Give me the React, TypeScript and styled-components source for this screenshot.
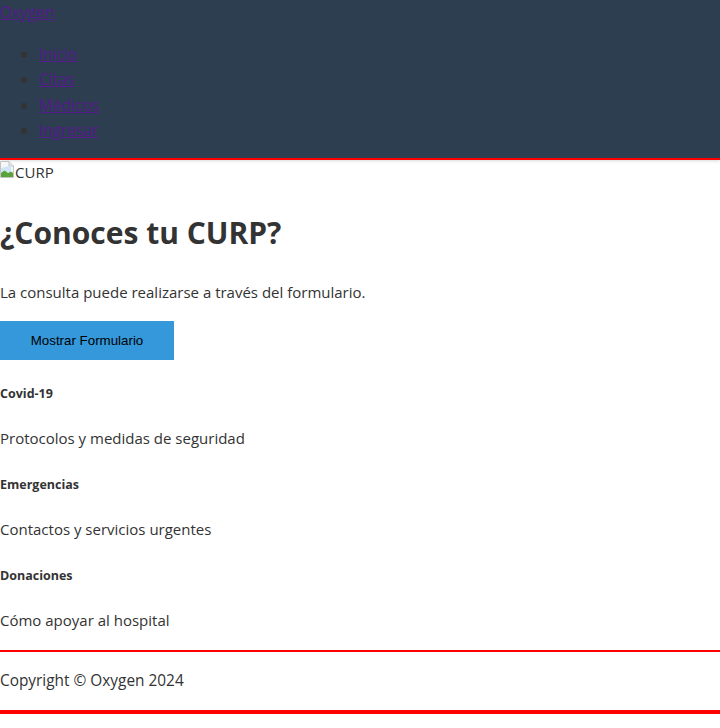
import React, { FC, ReactElement } from 'react';
import styled, { createGlobalStyle } from 'styled-components';

const GlobalStyle = createGlobalStyle`
  html, body {
    margin: 0;
    padding: 0;
    background: #fff;
  }
  body {
    font-family: "Open Sans", "Noto Sans", sans-serif;
    font-size: 15px;
    line-height: 25.6px;
    color: #333;
  }
  a {
    color: #551a8b;
    text-decoration: underline;
  }
`;

const Header = styled.header`
  height: 158px;
  background: #2c3e50;
  border-bottom: 2px solid #ff0000;
  box-shadow: 0 1px 3px rgba(0, 0, 0, 0.15);
`;
const Brand = styled.a`
  display: inline-block;
  font-size: 15.5px;
`;
const NavList = styled.ul`
  margin: 16px 0 0;
  padding-left: 39px;
`;
const NavItem = styled.li`
  font-size: 15.5px;
`;

const Main = styled.main``;

const BrokenImage = styled.div`
  display: flex;
  align-items: flex-start;
  height: 25.6px;
  padding-top: 1px;
  box-sizing: border-box;
`;
const AltText = styled.span`
  line-height: 22px;
  margin-left: 1px;
`;

const Title = styled.h1`
  margin: 21.5px 0;
  font-size: 30px;
  line-height: 51.2px;
  font-weight: 700;
`;
const Text = styled.p`
  margin: 16px 0;
`;
const ShowButton = styled.button`
  display: block;
  width: 174px;
  height: 39px;
  margin: 0;
  border: none;
  background: #3498db;
  color: #000;
  font-family: "Liberation Sans", Arial, sans-serif;
  font-size: 13.33px;
  cursor: pointer;
`;

const Card = styled.section``;
const CardTitle = styled.h5`
  margin: 22.2px 0;
  font-size: 12.5px;
  line-height: 21.25px;
  font-weight: 700;
`;

const Footer = styled.footer`
  border-top: 2px solid #ff0000;
  border-bottom: 4px solid #ff0000;
`;

const FooterText = styled.p`
  margin: 16px 0;
  font-size: 15.4px;
`;

const links = ['Inicio', 'Citas', 'Médicos', 'Ingresar'];

const cards = [
  { title: 'Covid-19', text: 'Protocolos y medidas de seguridad' },
  { title: 'Emergencias', text: 'Contactos y servicios urgentes' },
  { title: 'Donaciones', text: 'Cómo apoyar al hospital' },
];

// broken image placeholder, as the browser draws it
const BrokenIcon: FC = (): ReactElement => (
  <svg width="14" height="17" viewBox="0 0 14 17">
    <path d="M0.5 0.5 H9 L13.5 5 V16.5 H0.5 Z" fill="#f7f7f7" stroke="#c4c4c4" />
    <path d="M9 0.5 V5 H13.5" fill="#e6e6e6" stroke="#c4c4c4" />
    <path d="M1 7 L11 4.5 V11 L1 13 Z" fill="#cfe6f7" />
    <path d="M1 16 V12 L4.5 9.5 L8 12 L11 10.5 L13 12 V16 Z" fill="#59a33a" />
  </svg>
);

const App: FC = (): ReactElement => (
  <>
    <GlobalStyle />
    <Header>
      <Brand href="#">Oxygen</Brand>
      <NavList>
        {links.map(link => (
          <NavItem key={link}>
            <a href="#">{link}</a>
          </NavItem>
        ))}
      </NavList>
    </Header>

    <Main>
      <BrokenImage>
        <BrokenIcon />
        <AltText>CURP</AltText>
      </BrokenImage>
      <Title>¿Conoces tu CURP?</Title>
      <Text>La consulta puede realizarse a través del formulario.</Text>
      <ShowButton>Mostrar Formulario</ShowButton>

      {cards.map(card => (
        <Card key={card.title}>
          <CardTitle>{card.title}</CardTitle>
          <Text>{card.text}</Text>
        </Card>
      ))}
    </Main>

    <Footer>
      <FooterText>Copyright © Oxygen 2024</FooterText>
    </Footer>
  </>
);

export default App;
